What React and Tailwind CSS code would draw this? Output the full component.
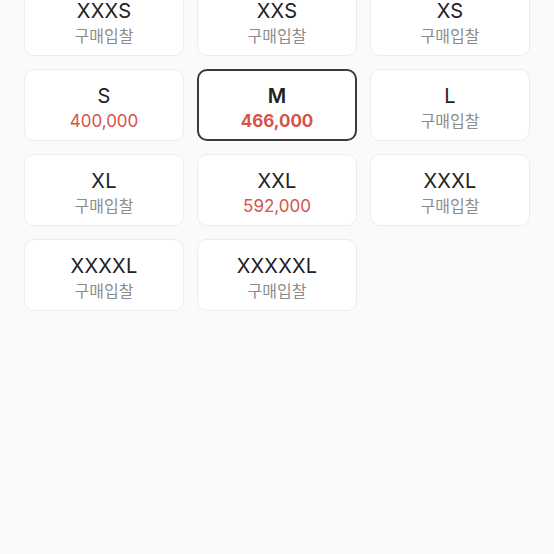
const sizes = [
  { id: 1, size: "XXXS", price: null },
  { id: 2, size: "XXS", price: null },
  { id: 3, size: "XS", price: null },
  { id: 4, size: "S", price: "400,000" },
  { id: 5, size: "M", price: "466,000", selected: true },
  { id: 6, size: "L", price: null },
  { id: 7, size: "XL", price: null },
  { id: 8, size: "XXL", price: "592,000" },
  { id: 9, size: "XXXL", price: null },
  { id: 10, size: "XXXXL", price: null },
  { id: 11, size: "XXXXXL", price: null },
];

const SizeCard = ({ item }) => {
  const cardClass = item.selected
    ? "border-2 border-[#3a3a3a]"
    : "border border-[#ececec]";

  return (
    <button
      className={`h-[72px] pt-[4px] rounded-[10px] bg-white flex flex-col items-center justify-center ${cardClass}`}
    >
      <span
        className={`text-[20px] leading-[24px] tracking-[0.2px] text-[#222222] ${
          item.selected ? "font-semibold" : "font-normal"
        }`}
      >
        {item.size}
      </span>

      {item.price ? (
        <span
          className={`mt-[3px] text-[17px] leading-[20px] text-[#d6534b] ${
            item.selected ? "font-bold" : "font-normal"
          }`}
        >
          {item.price}
        </span>
      ) : (
        <span className="mt-[3px] text-[16px] leading-[20px] text-[#8c8c8c]">
          구매입찰
        </span>
      )}
    </button>
  );
};

const App = () => {
  return (
    <div
      className="h-[554px] overflow-hidden bg-[#fafafa]"
      style={{ fontFamily: "Inter, 'Noto Sans CJK KR', sans-serif" }}
    >
      <div className="-mt-[16px] grid grid-cols-3 gap-x-[13px] gap-y-[13px] px-[24px]">
        {sizes.map((item) => (
          <SizeCard key={item.id} item={item} />
        ))}
      </div>
    </div>
  );
};

export default App;
